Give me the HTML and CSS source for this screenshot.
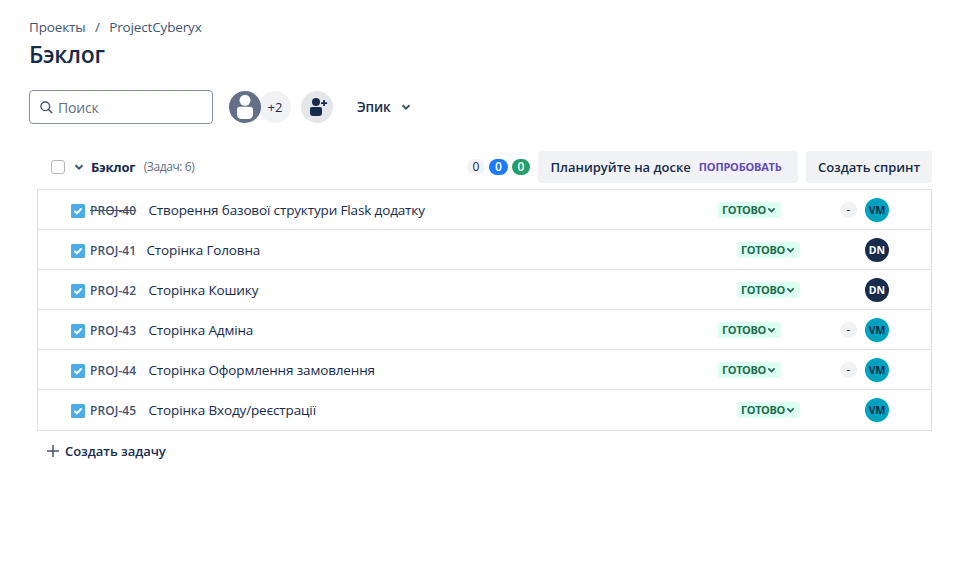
FILE: index.html
```html
<!DOCTYPE html>
<html lang="ru">
<head>
<meta charset="utf-8">
<title>Бэклог</title>
<link rel="stylesheet" href="styles.css">
</head>
<body>
<svg class="defs" width="0" height="0" aria-hidden="true">
  <symbol id="chevron" viewBox="0 0 10 8"><path d="M1.5 2.2 5 5.7 8.5 2.2" fill="none" stroke="currentColor" stroke-width="2"/></symbol>
  <symbol id="check" viewBox="0 0 14 14"><rect width="14" height="14" rx="1.5" fill="#4bade8"/><path d="M3.9 7.400 6 9.400 10 5" fill="none" stroke="#fff" stroke-width="2" stroke-linecap="round" stroke-linejoin="round"/></symbol>
</svg>
<header class="page-head">
  <nav class="crumbs"><span>Проекты</span><span class="slash">/</span><span>ProjectCyberyx</span></nav>
  <h1>Бэклог</h1>
</header>
<section class="filters">
  <div class="search">
    <svg width="13" height="13" viewBox="0 0 14 14"><circle cx="5.7" cy="5.7" r="4.7" fill="none" stroke="#44546f" stroke-width="1.5"/><path d="m9.200 9.200 3.500 3.500" stroke="#44546f" stroke-width="1.6" stroke-linecap="round"/></svg>
    <span class="placeholder">Поиск</span>
  </div>
  <div class="people">
    <svg class="person" width="32" height="32" viewBox="0 0 32 32"><circle cx="16" cy="16" r="16" fill="#626f86"/><circle cx="16" cy="9.3" r="5.5" fill="#fff"/><path d="M8 18.7a3 3 0 0 1 3-3h10a3 3 0 0 1 3 3V23.500a4.500 4.500 0 0 1-4.500 4.500h-7A4.500 4.500 0 0 1 8 23.500z" fill="#fff"/></svg>
    <span class="more">+2</span>
  </div>
  <button class="add-person"><svg width="32" height="32" viewBox="0 0 32 32" fill="#172b4d"><circle cx="15" cy="11" r="4"/><path d="M9 18a2 2 0 0 1 2-2h8a2 2 0 0 1 2 2v4a3 3 0 0 1-3 3h-6a3 3 0 0 1-3-3z"/><path d="M22.200 9h1.700v2.200h2.200v1.700h-2.200v2.200h-1.700v-2.200h-2.200v-1.700h2.200z"/></svg></button>
  <button class="epic"><span>Эпик</span><svg width="10" height="8"><use href="#chevron"/></svg></button>
</section>
<main class="backlog">
  <div class="backlog-head">
    <span class="box"></span>
    <svg class="toggle" width="10" height="8"><use href="#chevron"/></svg>
    <strong>Бэклог</strong>
    <span class="count">(Задач: 6)</span>
    <div class="totals"><span class="total">0</span><span class="total blue">0</span><span class="total green">0</span></div>
    <button class="btn plan"><span class="plan-text">Планируйте на доске</span><span class="try">ПОПРОБОВАТЬ</span></button>
    <button class="btn sprint">Создать спринт</button>
  </div>
  <ul class="issues">
    <li><svg class="check"><use href="#check"/></svg><span class="key done">PROJ-40</span><span class="title">Створення базової структури Flask додатку</span><span class="status"><span>ГОТОВО</span><svg width="9" height="8" viewBox="0 0 10 8"><use href="#chevron"/></svg></span><span class="estimate">-</span><span class="avatar vm">VM</span></li>
    <li><svg class="check"><use href="#check"/></svg><span class="key narrow">PROJ-41</span><span class="title">Сторінка Головна</span><span class="status wide"><span>ГОТОВО</span><svg width="9" height="8" viewBox="0 0 10 8"><use href="#chevron"/></svg></span><span class="avatar dn">DN</span></li>
    <li><svg class="check"><use href="#check"/></svg><span class="key">PROJ-42</span><span class="title">Сторінка Кошику</span><span class="status wide"><span>ГОТОВО</span><svg width="9" height="8" viewBox="0 0 10 8"><use href="#chevron"/></svg></span><span class="avatar dn">DN</span></li>
    <li><svg class="check"><use href="#check"/></svg><span class="key">PROJ-43</span><span class="title">Сторінка Адміна</span><span class="status"><span>ГОТОВО</span><svg width="9" height="8" viewBox="0 0 10 8"><use href="#chevron"/></svg></span><span class="estimate">-</span><span class="avatar vm">VM</span></li>
    <li><svg class="check"><use href="#check"/></svg><span class="key">PROJ-44</span><span class="title">Сторінка Оформлення замовлення</span><span class="status"><span>ГОТОВО</span><svg width="9" height="8" viewBox="0 0 10 8"><use href="#chevron"/></svg></span><span class="estimate">-</span><span class="avatar vm">VM</span></li>
    <li><svg class="check"><use href="#check"/></svg><span class="key">PROJ-45</span><span class="title">Сторінка Входу/реєстрації</span><span class="status wide"><span>ГОТОВО</span><svg width="9" height="8" viewBox="0 0 10 8"><use href="#chevron"/></svg></span><span class="avatar vm">VM</span></li>
  </ul>
  <button class="create"><svg width="12" height="12" viewBox="0 0 12 12"><path d="M6 0v12M0 6h12" stroke="#44546f" stroke-width="1.500"/></svg><span>Создать задачу</span></button>
</main>
</body>
</html>
```
FILE: styles.css
```css
* { box-sizing: border-box; }
body { margin: 0; padding: 17px 21px 0 29px; background: #fff; color: #172b4d; font: 14px/20px "Open Sans", "Noto Sans", sans-serif; }
button { border: 0; padding: 0; background: none; color: inherit; font: inherit; font-weight: 600; white-space: nowrap; }
.defs { display: block; position: absolute; }
svg { flex: none; display: block; }

.crumbs { display: flex; color: #44546f; font-size: 13.5px; letter-spacing: -0.15px; }
.slash { margin: 0 9.5px; }
h1 { margin: 3px 0 0; font-size: 23px; line-height: 28px; font-weight: 600; letter-spacing: -0.3px; }

.filters { display: flex; align-items: center; height: 34px; margin-top: 22px; }
.search { display: flex; align-items: center; gap: 5px; width: 184px; height: 34px; border: 1px solid #8590a2; border-radius: 4px; padding-left: 10px; color: #626f86; }
.placeholder { padding-top: 2px; letter-spacing: -0.2px; }
.people { display: flex; margin-left: 16px; }
.person { position: relative; }
.more { width: 32px; height: 32px; margin-left: -2px; border-radius: 50%; background: #f1f2f4; text-align: center; line-height: 32px; font-size: 13px; }
.add-person { width: 32px; height: 32px; margin-left: 10px; border-radius: 50%; background: #e4e6ea; }
.epic { display: flex; align-items: center; gap: 11px; margin-left: 24px; color: #172b4d; font-size: 13.5px; letter-spacing: -0.2px; }
.epic svg, .toggle { color: #44546f; }

.backlog { padding-left: 8px; margin-top: 27px; }
.backlog-head { display: flex; align-items: center; height: 32px; margin-bottom: 6px; padding-left: 14px; }
.box { width: 14px; height: 14px; border: 1.5px solid #b3b9c4; border-radius: 3px; }
.toggle { margin-left: 9px; }
.backlog-head strong { margin-left: 7px; font-weight: 700; font-size: 13px; letter-spacing: -0.25px; }
.count { margin-left: 8.5px; color: #626f86; font-size: 12px; letter-spacing: -0.4px; }
.totals { display: flex; gap: 4px; margin-left: auto; font-size: 12px; line-height: 16px; text-align: center; }
.total { width: 18px; height: 16px; border-radius: 8px; background: #f1f2f4; }
.blue, .green { color: #fff; background: #1d7afc; width: 19px; font-weight: 600; }
.green { background: #22a06b; width: 18px; }
.btn { display: flex; align-items: center; height: 32px; margin-left: 8px; border-radius: 3px; background: #f1f2f4; font-size: 13px; }
.plan { width: 260px; padding-left: 12.5px; }
.sprint { width: 126px; padding-left: 12px; letter-spacing: -0.08px; }
.try { margin-left: 4px; padding: 0 4px; height: 16px; border-radius: 3px; background: #f3f0ff; color: #5e4db2; font-size: 11px; line-height: 16px; font-weight: 700; letter-spacing: -0.2px; }

.issues { list-style: none; margin: 0; padding: 0; border: 1px solid #dcdfe4; height: 242px; }
.issues li { display: flex; align-items: center; height: 40px; padding: 0 42px 0 33px; border-bottom: 1px solid #dcdfe4; white-space: nowrap; }
.issues li:last-child { border-bottom-color: transparent; }
.check { width: 14px; height: 14px; margin-top: 2px; }
.key { width: 47px; margin-left: 5px; padding-top: 2px; color: #44546f; font-size: 12px; font-weight: 600; letter-spacing: 0.08px; }
.done { text-decoration: line-through; }
.title { margin-left: 11.500px; padding-top: 1px; font-size: 13.5px; letter-spacing: -0.14px; }
.narrow { width: 45px; }
.status { display: flex; align-items: center; gap: 1px; width: 63px; height: 16px; margin-left: auto; margin-right: 59px; padding-left: 4px; border-radius: 3px; background: #dcfff1; color: #216e4e; font-size: 11px; line-height: 16px; font-weight: 700; letter-spacing: -0.4px; }
.wide { margin-right: 65px; }
.estimate { width: 17px; height: 16px; margin-right: 8px; border-radius: 8px; background: #f1f2f4; text-align: center; font-size: 12px; line-height: 16px; }
.avatar { width: 24px; height: 24px; border-radius: 50%; text-align: center; font-size: 10.5px; line-height: 24px; font-weight: 700; }
.vm { background: #00a3bf; color: #172b4d; }
.dn { background: #172b4d; color: #fff; }
.create { display: flex; align-items: center; gap: 6px; margin: 10px 0 0 10px; font-size: 13px; letter-spacing: -0.05px; }
```
